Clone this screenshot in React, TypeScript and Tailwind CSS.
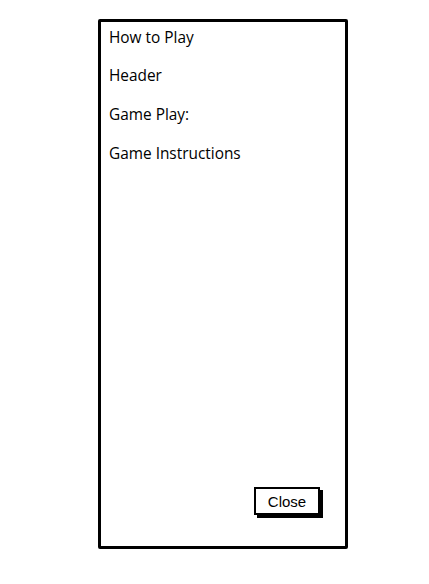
export default function App() {
  const items = ['How to Play', 'Header', 'Game Play:', 'Game Instructions']

  return (
    <div className="min-h-[584px] w-[429px] bg-white pl-[98px] pt-[19px]">
      <div className="flex h-[530px] w-[250px] flex-col border-[3px] border-black bg-white pl-[8px] pr-[25px] pb-[31px] pt-[4.5px] rounded-[2px]">
        <div className="flex flex-col gap-[16.8px]">
          {items.map(t => (
            <p key={t} className="text-[15.4px] leading-[22px] text-black" style={{ fontFamily: '"Open Sans", sans-serif' }}>
              {t}
            </p>
          ))}
        </div>
        <div className="mt-auto flex justify-end">
          <button className="h-[28px] w-[66px] border-2 border-black bg-white text-[15px] leading-none text-black shadow-[3px_3px_0_#000] font-['Liberation_Sans',sans-serif]">
            Close
          </button>
        </div>
      </div>
    </div>
  )
}
